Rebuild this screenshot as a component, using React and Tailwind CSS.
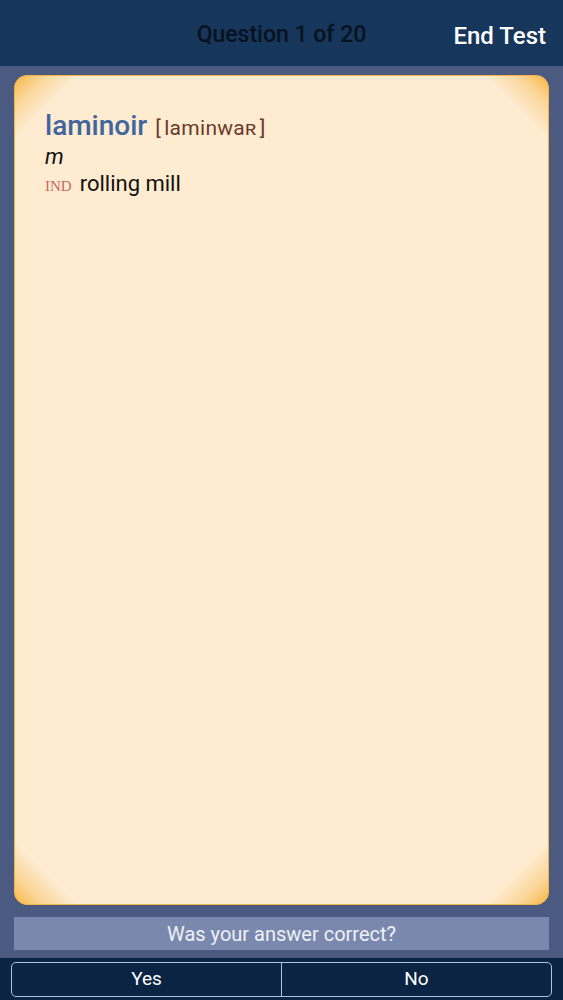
import React from 'react';

const font = { fontFamily: 'Roboto, "Liberation Sans", Arial, sans-serif' };

export default function App() {
  return (
    <div className="flex h-[1000px] w-full flex-col bg-[#4a5a80]" style={font}>
      {/* Header */}
      <div className="relative flex h-[66px] shrink-0 items-center justify-center bg-[#17365b]">
        <span className="mt-[4px] text-[23px] font-medium text-[#08121f]">Question 1 of 20</span>
        <button className="absolute right-[17px] top-[18px] text-[24px] font-medium text-white">
          End Test
        </button>
      </div>

      {/* Card */}
      <div className="flex flex-1 flex-col px-[14px] pt-[9px]">
        <div className="flex-1 rounded-[13px] border border-[#f2b545] bg-[#feebd0] bg-[linear-gradient(135deg,#f8b743_0,#fbd596_20px,#feebd000_44px),linear-gradient(225deg,#f8b743_0,#fbd596_20px,#feebd000_44px),linear-gradient(315deg,#f8b743_0,#fbd596_20px,#feebd000_44px),linear-gradient(45deg,#f8b743_0,#fbd596_20px,#feebd000_44px)] px-[30px] pt-[36px]">
          <div className="flex items-baseline gap-[8px]">
            <span className="text-[28px] font-medium leading-none text-[#40659f]">laminoir</span>
            <span className="text-[21px] leading-none tracking-[0.3px] text-[#6a3a2c]">
              [<span className="px-[3px]">laminwaʀ</span>]
            </span>
          </div>
          <div className="mt-[3px] text-[22px] italic leading-[27px] text-[#111]">m</div>
          <div className="flex items-baseline gap-[8px]">
            <span className="text-[15px] text-[#c46a5f]" style={{ fontFamily: '"Liberation Serif", serif' }}>
              IND
            </span>
            <span className="text-[22px] leading-[27px] text-[#111]">rolling mill</span>
          </div>
        </div>

        <div className="mt-[12px] flex h-[33px] items-center justify-center bg-[#7b88ad] text-[20px] text-[#eef1f8]">
          Was your answer correct?
        </div>
      </div>

      {/* Answer buttons */}
      <div className="mt-[8px] flex h-[42px] shrink-0 items-center bg-[#0b2444] px-[11px]">
        <div className="flex h-[35px] w-full overflow-hidden rounded-[5px] border border-[#a9c6e4]">
          <button className="flex-1 border-r border-[#a9c6e4] text-[19px] text-white">Yes</button>
          <button className="flex-1 text-[19px] text-white">No</button>
        </div>
      </div>
    </div>
  );
}
